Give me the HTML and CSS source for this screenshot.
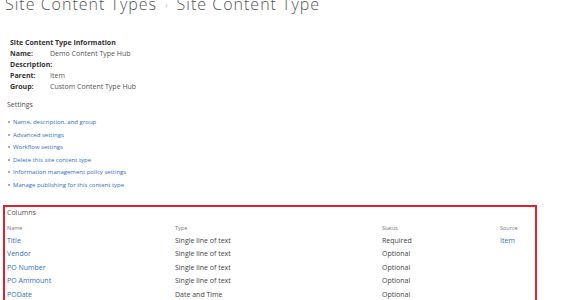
FILE: index.html
```html
<!DOCTYPE html>
<html>
<head>
<meta charset="utf-8">
<link rel="stylesheet" href="styles.css">
</head>
<body>
<div class="page">
  <h1 class="title">Site Content Types <span class="sep">›</span> Site Content Type</h1>

  <section class="info">
    <div class="info-head">Site Content Type Information</div>
    <div class="info-row"><span class="lbl">Name:</span><span class="val">Demo Content Type Hub</span></div>
    <div class="info-row"><span class="lbl">Description:</span><span class="val"></span></div>
    <div class="info-row"><span class="lbl">Parent:</span><a class="val link">Item</a></div>
    <div class="info-row"><span class="lbl">Group:</span><span class="val">Custom Content Type Hub</span></div>
  </section>

  <section class="settings">
    <div class="sec-head">Settings</div>
    <ul class="set-list">
      <li><a class="link">Name, description, and group</a></li>
      <li><a class="link">Advanced settings</a></li>
      <li><a class="link">Workflow settings</a></li>
      <li><a class="link">Delete this site content type</a></li>
      <li><a class="link">Information management policy settings</a></li>
      <li><a class="link">Manage publishing for this content type</a></li>
    </ul>
  </section>

  <section class="columns">
    <div class="sec-head cols-head">Columns</div>
    <div class="grid">
      <div class="hd">Name</div><div class="hd">Type</div><div class="hd">Status</div><div class="hd">Source</div>
      <a class="link">Title</a><div>Single line of text</div><div>Required</div><a class="link">Item</a>
      <a class="link">Vendor</a><div>Single line of text</div><div>Optional</div><div></div>
      <a class="link">PO Number</a><div>Single line of text</div><div>Optional</div><div></div>
      <a class="link">PO Ammount</a><div>Single line of text</div><div>Optional</div><div></div>
      <a class="link">PODate</a><div>Date and Time</div><div>Optional</div><div></div>
    </div>
  </section>
</div>
</body>
</html>
```

FILE: styles.css
```css
html, body {
  margin: 0;
  padding: 0;
  background: #fff;
  overflow: hidden;
}
body {
  font-family: "Open Sans", "Noto Sans", sans-serif;
  font-size: 7px;
  color: #444;
  width: 576px;
  height: 300px;
}
.page {
  padding-left: 7px;
}
.title {
  font-family: "Open Sans", sans-serif;
  font-weight: 300;
  font-size: 16px;
  line-height: 16px;
  color: #555;
  margin: -4px 0 0 -2px;
  letter-spacing: 1px;
  white-space: nowrap;
}
.title .sep {
  font-size: 9px;
  color: #888;
  padding: 0 3px;
  vertical-align: 2px;
}
.link {
  color: #2f6fbd;
  text-decoration: none;
}
.info {
  margin: 23.5px 0 0 3px;
}
.info-head {
  font-weight: 700;
  font-size: 7px;
  color: #333;
  line-height: 11px;
}
.info-row {
  display: flex;
  line-height: 11px;
}
.info-row .lbl {
  width: 40px;
  font-weight: 700;
  color: #333;
}
.info-row .val {
  color: #555;
}
.settings {
  margin-top: 7.5px;
}
.sec-head {
  line-height: 12px;
  color: #555;
}
.set-list {
  list-style: none;
  margin: 4.75px 0 0 0;
  padding: 0;
  font-size: 6px;
}
.set-list li {
  display: flex;
  align-items: center;
  gap: 3px;
  height: 12.5px;
}
.set-list li::before {
  content: "";
  width: 2px;
  height: 2px;
  background: #aaa;
  margin-left: 1px;
}
.columns {
  margin: 14.25px 39px 0 -4px;
  border: 2px solid #e0202f;
  padding: 0 0 0 2px;
  height: 100px;
}
.cols-head {
  line-height: 12px;
}
.grid {
  display: grid;
  grid-template-columns: 168px 207px 118px 1fr;
  margin-top: 3.5px;
  line-height: 13.6px;
  color: #444;
}
.grid .hd {
  font-size: 5.5px;
  color: #777;
  line-height: 11px;
}
```
